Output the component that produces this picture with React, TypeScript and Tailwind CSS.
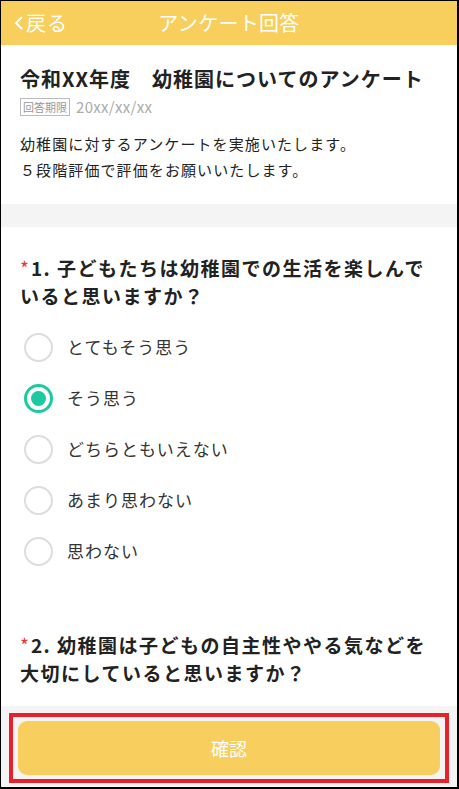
import React from "react";

const options = ["とてもそう思う", "そう思う", "どちらともいえない", "あまり思わない", "思わない"];

export default function App() {
  const font = { fontFamily: '"Noto Sans CJK JP", "Noto Sans", sans-serif' };
  return (
    <div
      className="w-[459px] h-[789px] flex flex-col overflow-hidden border-t border-l border-r-2 border-b-2 border-black bg-white text-[#222]"
      style={font}
    >
      <header className="h-[44px] shrink-0 bg-[#F8CE5C] grid grid-cols-[1fr_auto_1fr] items-center text-white">
        <div className="flex items-center pl-[12px] text-[20px] tracking-[1px]">
          <svg width="12" height="18" viewBox="0 0 12 18" className="mr-[1px]">
            <path d="M9 3 L3 9 L9 15" fill="none" stroke="white" strokeWidth="2" />
          </svg>
          <span>戻る</span>
        </div>
        <div className="text-[20px] leading-none tracking-[0.3px]">アンケート回答</div>
        <div />
      </header>

      <div className="flex-1 overflow-hidden flex flex-col">
        <section className="px-[19px] pt-[19px] pb-[21px]">
          <h1 className="text-[20px] font-bold leading-[30px] tracking-[1px]">令和XX年度　幼稚園についてのアンケート</h1>
          <div className="mt-[3px] flex items-center gap-[6px]">
            <span className="border border-[#bbb] text-[#999] text-[11px] leading-[16px] px-[2px]">回答期限</span>
            <span className="text-[#aaa] text-[15px] leading-[20px] tracking-[0.3px]">20xx/xx/xx</span>
          </div>
          <p className="mt-[14px] text-[15px] leading-[26px] tracking-[1.1px]">
            幼稚園に対するアンケートを実施いたします。
            <br />
            ５段階評価で評価をお願いいたします。
          </p>
        </section>

        <div className="h-[23px] shrink-0 bg-[#F4F4F4]" />

        <section className="px-[19px] pt-[27px]">
          <h2 className="text-[19px] font-bold leading-[28px] tracking-[1.5px]">
            <span className="text-[#E53935] font-normal tracking-normal mr-[2px]">*</span>
            <span>1. 子どもたちは幼稚園での生活を楽しんでいると思いますか？</span>
          </h2>
          <div className="mt-[22px] flex flex-col gap-[21px] pl-[4px]">
            {options.map((o, i) => (
              <label key={o} className="flex items-center gap-[14px] h-[30px]">
                {i === 1 ? (
                  <span className="w-[29px] h-[29px] rounded-full border-[3px] border-[#1DC9A0] flex items-center justify-center">
                    <span className="w-[15px] h-[15px] rounded-full bg-[#1DC9A0]" />
                  </span>
                ) : (
                  <span className="w-[29px] h-[29px] rounded-full border-2 border-[#DDDDDD]" />
                )}
                <span className="text-[17px] text-[#333] tracking-[1px]">{o}</span>
              </label>
            ))}
          </div>
        </section>

        <section className="px-[19px] pt-[65px]">
          <h2 className="text-[19px] font-bold leading-[28px] tracking-[1.5px]">
            <span className="text-[#E53935] font-normal tracking-normal mr-[2px]">*</span>
            <span>2. 幼稚園は子どもの自主性ややる気などを大切にしていると思いますか？</span>
          </h2>
        </section>
      </div>

      <footer className="h-[81px] shrink-0 bg-[#F4F4F4] px-[8px] pt-[7px]">
        <div className="border-[4px] border-[#E8202A] p-[4px] pl-[5px] pr-[5px]">
          <button className="w-full h-[54px] rounded-[9px] bg-[#F8CE5F] text-white text-[18px]">確認</button>
        </div>
      </footer>
    </div>
  );
}
